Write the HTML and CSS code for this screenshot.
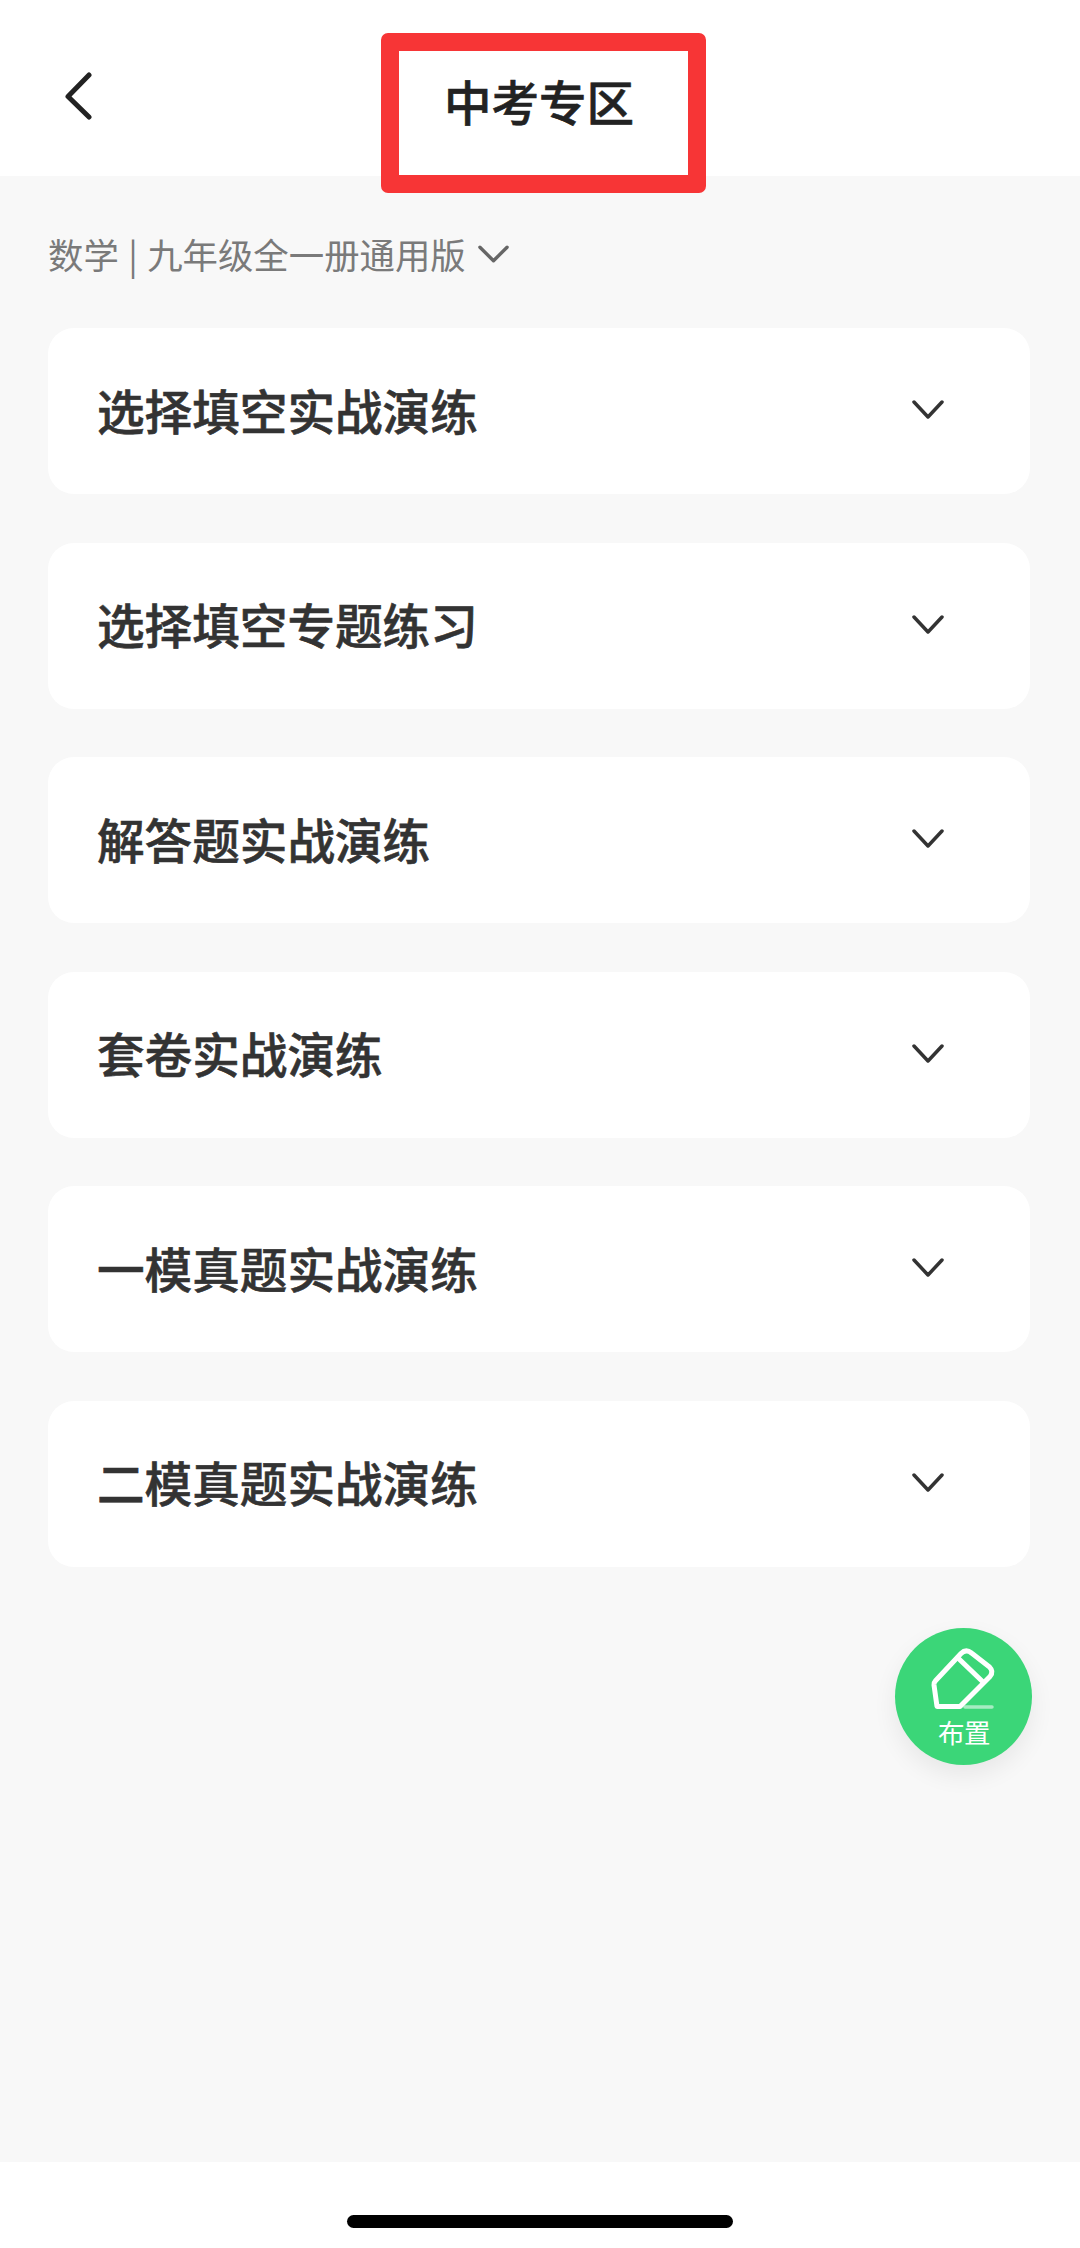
FILE: index.html
```html
<!DOCTYPE html>
<html lang="zh-CN">
<head>
<meta charset="utf-8">
<title>中考专区</title>
<link rel="stylesheet" href="styles.css">
</head>
<body>
<div class="page">
  <header class="topbar">
    <svg class="back" viewBox="0 0 30 48" aria-hidden="true"><path d="M26 3 5 24.5 26 45"/></svg>
    <h1 class="title">中考专区</h1>
    <div class="highlight"></div>
  </header>
  <main class="content">
    <div class="filter">
      <span>数学 | 九年级全一册通用版</span>
      <svg class="filter-caret" viewBox="0 0 32 20" aria-hidden="true"><path d="M2 3 16 17 30 3"/></svg>
    </div>
    <div class="list">
      <section class="card"><span class="card-title">选择填空实战演练</span><svg class="caret" viewBox="0 0 32 20" aria-hidden="true"><path d="M2 2 16 17 30 2"/></svg></section>
      <section class="card"><span class="card-title">选择填空专题练习</span><svg class="caret" viewBox="0 0 32 20" aria-hidden="true"><path d="M2 2 16 17 30 2"/></svg></section>
      <section class="card"><span class="card-title">解答题实战演练</span><svg class="caret" viewBox="0 0 32 20" aria-hidden="true"><path d="M2 2 16 17 30 2"/></svg></section>
      <section class="card"><span class="card-title">套卷实战演练</span><svg class="caret" viewBox="0 0 32 20" aria-hidden="true"><path d="M2 2 16 17 30 2"/></svg></section>
      <section class="card"><span class="card-title">一模真题实战演练</span><svg class="caret" viewBox="0 0 32 20" aria-hidden="true"><path d="M2 2 16 17 30 2"/></svg></section>
      <section class="card"><span class="card-title">二模真题实战演练</span><svg class="caret" viewBox="0 0 32 20" aria-hidden="true"><path d="M2 2 16 17 30 2"/></svg></section>
    </div>
    <button class="fab" type="button">
      <svg class="fab-icon" viewBox="0 0 137 137" aria-hidden="true">
        <path class="pen" d="M42 78.500 39 57Q38.800 54.500 40.500 52.700L66 25.500Q71 20.500 76.500 25L94.500 39Q99 43.500 95 48.500L65 78.500Z"/>
        <path class="pen" d="M63 30 88 54"/>
        <path class="underline" d="M70 79H97"/>
      </svg>
      <span class="fab-label">布置</span>
    </button>
  </main>
  <footer class="homebar"><div class="home-indicator"></div></footer>
</div>
</body>
</html>
```
FILE: styles.css
```css
* { box-sizing: border-box; }
html, body { margin: 0; padding: 0; }
body {
  width: 1080px;
  height: 2248px;
  overflow: hidden;
  font-family: "Noto Sans CJK SC", "Noto Sans", sans-serif;
  background: #f8f8f8;
}
.page { display: flex; flex-direction: column; height: 2248px; }

.topbar {
  position: relative;
  flex: none;
  height: 176px;
  background: #fff;
  display: flex;
  align-items: flex-start;
  justify-content: center;
}
.back {
  position: absolute;
  left: 63px;
  top: 72px;
  width: 30px;
  height: 48px;
  fill: none;
  stroke: #222;
  stroke-width: 5;
  stroke-linecap: round;
  stroke-linejoin: round;
}
.title {
  margin: 71px 0 0 -2px;
  font-size: 47.500px;
  line-height: 60px;
  font-weight: 500;
  -webkit-text-stroke: 0.600px #222;
  color: #222;
}
.highlight {
  position: absolute;
  left: 381px;
  top: 33px;
  width: 325px;
  height: 160px;
  border: 18px solid #f73536;
  border-radius: 7px;
  z-index: 2;
}

.content {
  position: relative;
  flex: 1;
  padding: 54px 50px 0 48px;
}
.filter {
  display: flex;
  align-items: center;
  gap: 12px;
  height: 48px;
  font-size: 35.400px;
  line-height: 48px;
  word-spacing: 1.500px;
  color: #7a7a7a;
}
.filter-caret {
  width: 31px;
  height: 20px;
  fill: none;
  stroke: #666;
  stroke-width: 3.500;
  stroke-linecap: round;
  stroke-linejoin: round;
}
.list {
  display: flex;
  flex-direction: column;
  gap: 48.600px;
  margin-top: 50px;
}
.card {
  height: 166px;
  background: #fff;
  border-radius: 26px;
  display: flex;
  align-items: center;
  justify-content: space-between;
  padding: 0 86px 0 49px;
}
.card-title {
  font-size: 47.600px;
  line-height: 60px;
  margin-top: -3px;
  font-weight: 500;
  -webkit-text-stroke: 0.600px #333;
  color: #333;
}
.caret {
  width: 32px;
  height: 20px;
  margin-top: -2px;
  fill: none;
  stroke: #333;
  stroke-width: 3.500;
  stroke-linecap: round;
  stroke-linejoin: round;
}

.fab {
  position: absolute;
  left: 895px;
  top: 1452px;
  width: 137px;
  height: 137px;
  padding: 0;
  border: 0;
  border-radius: 50%;
  background: #3bd678;
  box-shadow: 0 10px 24px rgba(0, 0, 0, 0.07);
}
.fab-icon {
  position: absolute;
  left: 0;
  top: 0;
  width: 137px;
  height: 137px;
  fill: none;
}
.pen { stroke: #fff; stroke-width: 5; stroke-linecap: round; stroke-linejoin: round; }
.underline { stroke: rgba(255, 255, 255, 0.55); stroke-width: 3.500; stroke-linecap: round; }
.fab-label {
  position: absolute;
  left: 0;
  right: 0;
  top: 90px;
  text-align: center;
  font-size: 26.500px;
  line-height: 32px;
  font-weight: 500;
  color: #fff;
}

.homebar {
  flex: none;
  height: 86px;
  background: #fff;
  display: flex;
  justify-content: center;
  padding-top: 53px;
}
.home-indicator {
  width: 386px;
  height: 13px;
  border-radius: 7px;
  background: #000;
}
```
